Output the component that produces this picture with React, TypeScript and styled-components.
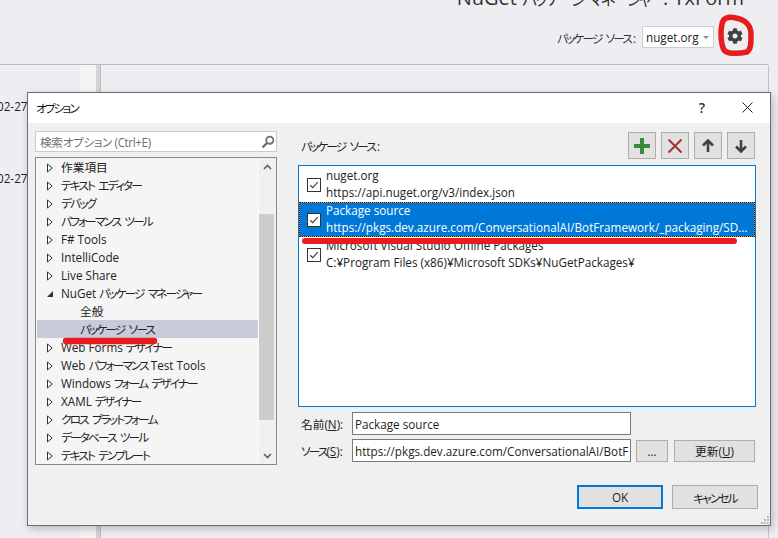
import styled, { createGlobalStyle } from 'styled-components';
import { FaCog } from 'react-icons/fa';

const Global = createGlobalStyle`
  html, body { margin: 0; padding: 0; background: #eeeef2; }
  body {
    width: 778px; height: 538px; overflow: hidden; position: relative;
    font-family: "Open Sans", "Noto Sans CJK JP", sans-serif; font-size: 11.7px; color: #1e1e1e;
    font-feature-settings: "palt";
  }
  input, button { font-family: inherit; font-size: 11.7px; color: #1e1e1e; font-feature-settings: "palt"; }
`;

const Kana = styled.span`letter-spacing: -1.9px; word-spacing: 3px;`;
const TitleKana = styled.span`font-size: 16px; letter-spacing: -2.4px; word-spacing: 3px;`;
const Colon = styled.span`margin-left: 2px;`;

const Page = styled.div`width: 778px; height: 538px; display: flex; flex-direction: column; overflow: hidden;`;
const Header = styled.header`
  height: 64px; flex: none; border-bottom: 1px solid #b9b9bc; margin-right: 10px;
  display: flex; flex-direction: column; align-items: flex-end; padding-right: 25px; overflow: hidden;
`;
const Title = styled.div`font-size: 20px; line-height: 26px; margin: -15px -1px 0 0; white-space: nowrap; color: #333;`;
const SourceBar = styled.div`display: flex; align-items: center; gap: 6px; margin-top: 14px;`;
const BarLabel = styled.span`color: #333; white-space: nowrap;`;
const Combo = styled.div`
  width: 72px; height: 22px; box-sizing: border-box; background: #fff; border: 1px solid #ccced3;
  display: flex; align-items: center; justify-content: space-between; padding: 0 4px 0 3px; color: #1e1e1e;
`;
const ComboArrow = styled.span`border-left: 3px solid transparent; border-right: 3px solid transparent; border-top: 3px solid #888;`;
const GearBtn = styled.span`display: flex; width: 16px; height: 16px; margin: -2px 0 0 7px; color: #424242; font-size: 16px;`;

const Under = styled.div`flex: 1; display: flex; min-height: 0;`;
const LogColumn = styled.div`
  width: 80px; flex: none; overflow: hidden; padding-top: 32px; display: flex; flex-direction: column; gap: 54px;
`;
const LogLine = styled.div`margin-left: -3px; line-height: 18px; white-space: nowrap;`;
const Splitter = styled.div`width: 16px; flex: none; background: #f5f5f6;`;
const SplitGrip = styled.div`width: 4px; flex: none; background: #d4d4d6; border-right: 1px solid #bdbdc0; margin-right: 2px;`;
const Fill = styled.div`flex: 1;`;
const RightEdge = styled.div`width: 1px; flex: none; background: #c4c4c7; margin-right: 9px;`;

const Dialog = styled.section`
  position: absolute; left: 27px; top: 92px; width: 744px; height: 434px; box-sizing: border-box;
  background: #f0f0f0; border: 1px solid #6c6c6c; box-shadow: 2px 3px 8px rgba(0,0,0,.22);
  display: flex; flex-direction: column;
`;
const TitleBar = styled.div`
  height: 30px; box-sizing: border-box; flex: none; background: #fff; display: flex; align-items: center; padding: 0 17px 2px 8px;
`;
const DialogTitle = styled.div`flex: 1; color: #111;`;
const Help = styled.span`font-size: 14px; font-weight: 600; color: #333; margin-right: 37px;`;
const Body = styled.div`flex: 1; display: flex; padding: 8px 14px 0 7px; gap: 21px; min-height: 0; position: relative;`;

const LeftCol = styled.div`width: 242px; flex: none; display: flex; flex-direction: column; gap: 5px;`;
const SearchBox = styled.div`
  height: 21px; box-sizing: border-box; border: 1px solid #c9c9d2; background: #fff; display: flex; align-items: center; padding: 0 1px 0 4px;
`;
const SearchInput = styled.input`
  flex: 1; min-width: 0; border: 0; padding: 0; background: transparent; outline: 0;
  &::placeholder { color: #6f6f6f; opacity: 1; letter-spacing: -0.4px; }
`;
const Tree = styled.div`
  height: 308px; box-sizing: border-box; border: 1px solid #828790; background: #f5f5f5; display: flex; overflow: hidden;
`;
const TreeRows = styled.div`flex: 1; min-width: 0; padding-left: 1px; overflow: hidden;`;
const TreeRow = styled.div<{ $level?: number; $active?: boolean }>`
  height: 18px; display: block; line-height: 18px; white-space: nowrap; color: #222;
  padding-left: ${p => (p.$level ? 43 : 10)}px;
  background: ${p => (p.$active ? '#c9cbda' : 'transparent')};
`;
const Twisty = styled.svg`width: 6px; height: 10px; margin-right: 8px; vertical-align: -1px;`;
const ScrollBar = styled.div`width: 17px; flex: none; background: #f0f0f0; display: flex; flex-direction: column; align-items: center; border-left: 1px solid #fafafa;`;
const ScrollBtn = styled.div`height: 17px; flex: none; display: flex; align-items: center; justify-content: center;`;
const ScrollTrack = styled.div`flex: 1; width: 100%; padding-top: 39px; box-sizing: border-box;`;
const ScrollThumb = styled.div`height: 206px; width: 15px; background: #cdcdcd;`;

const RightCol = styled.div`flex: 1; min-width: 0; display: flex; flex-direction: column;`;
const ToolRow = styled.div`height: 34px; flex: none; display: flex; align-items: flex-start; justify-content: space-between; padding: 0 1px 0 3px;`;
const SourcesLabel = styled.div`padding-top: 6px; line-height: 18px; color: #222;`;
const Tools = styled.div`display: flex; gap: 5px; margin-top: 1px;`;
const ToolBtn = styled.button`
  width: 28px; height: 27px; box-sizing: border-box; padding: 0; background: #e1e1e1; border: 1px solid #adadad;
  display: flex; align-items: center; justify-content: center;
`;
const SourceList = styled.div`height: 242px; flex: none; box-sizing: border-box; border: 1px solid #0078d7; background: #fff; padding-top: 1px;`;
const SourceRow = styled.div<{ $selected?: boolean }>`
  height: 35px; box-sizing: border-box; display: flex; align-items: center; padding-left: 7px; gap: 5px;
  color: ${p => (p.$selected ? '#fff' : '#222')};
  border: 1px ${p => (p.$selected ? 'dotted #1a1a1a' : 'solid transparent')};
  background: ${p => (p.$selected ? 'linear-gradient(#0078d7,#0078d7) padding-box, #ff8a1f border-box' : 'transparent')};
`;
const Check = styled.svg`width: 14px; height: 14px; flex: none;`;
const SourceText = styled.div`flex: 1; min-width: 0; line-height: 16.5px; padding-bottom: 2px;`;
const SourceLine = styled.div`white-space: nowrap; overflow: hidden; text-overflow: ellipsis; padding-right: 3px;`;

const FormRows = styled.div`display: flex; flex-direction: column; gap: 4px; margin-top: 5px;`;
const FormRow = styled.div`display: flex; align-items: flex-end; gap: 5px; padding-left: 3px;`;
const FormLabel = styled.label`width: 46px; flex: none; line-height: 22px; color: #222; white-space: nowrap;`;
const FormInput = styled.input`
  width: 279px; height: 23px; box-sizing: border-box; flex: none; border: 1px solid #7a7a7a; background: #fff; padding: 0 2px; outline: 0;
`;
const SmallBtn = styled.button<{ $w: number; $gap?: number }>`
  width: ${p => p.$w}px; height: 22px; box-sizing: border-box; padding: 0; background: #e1e1e1; border: 1px solid #adadad;
  line-height: 18px; flex: none; margin-left: ${p => p.$gap ?? 0}px;
`;
const Footer = styled.div`display: flex; justify-content: flex-end; gap: 9px; margin: 23px -2px 0 0;`;
const DlgBtn = styled.button<{ $primary?: boolean }>`
  width: 86px; height: 24px; box-sizing: border-box; padding: 0; background: #e1e1e1;
  border: ${p => (p.$primary ? '2px solid #0078d7' : '1px solid #adadad')};
`;
const Grip = styled.svg`position: absolute; right: 1px; bottom: 1px; width: 9px; height: 9px;`;
const Marks = styled.svg`position: absolute; left: 0; top: 0; width: 778px; height: 538px; pointer-events: none;`;

const closed = ['作業項目', 'テキスト エディター', 'デバッグ', 'パフォーマンス ツール', 'F# Tools', 'IntelliCode', 'Live Share'];
const closedAfter = ['Web Forms デザイナー', 'Web パフォーマンス Test Tools', 'Windows フォーム デザイナー', 'XAML デザイナー', 'クロス プラットフォーム', 'データベース ツール', 'テキスト テンプレート'];
const sources = [
  { name: 'nuget.org', url: 'https://api.nuget.org/v3/index.json' },
  { name: 'Package source', url: 'https://pkgs.dev.azure.com/ConversationalAI/BotFramework/_packaging/SDK/nuget/v3/index.json', selected: true },
  { name: 'Microsoft Visual Studio Offline Packages', url: 'C:¥Program Files (x86)¥Microsoft SDKs¥NuGetPackages¥' },
];

// katakana runs are set tighter, the fonts here are wider than the original UI font
function Mixed({ text }: { text: string }) {
  const parts = text.split(/([\u30a0-\u30ff]+(?: [\u30a0-\u30ff]+)*)/);
  return <>{parts.map((p, i) => (i % 2 ? <Kana key={i}>{p}</Kana> : p))}</>;
}

function Closed() {
  return <Twisty viewBox="0 0 6 10"><path d="M.5 1v8L5.2 5z" fill="#fff" stroke="#333" /></Twisty>;
}
function Open() {
  return <Twisty viewBox="0 0 6 10"><path d="M6 2v6H0z" fill="#333" /></Twisty>;
}
function CheckBox() {
  return (
    <Check viewBox="0 0 14 14">
      <rect x=".5" y=".5" width="13" height="13" fill="#fff" stroke="#333" />
      <path d="M3.2 7.2 5.7 9.6 10.8 4.2" fill="none" stroke="#444" strokeWidth="1.2" />
    </Check>
  );
}

export default function App() {
  return (
    <>
      <Global />
      <Page>
        <Header>
          <Title>NuGet <TitleKana>パッケージ マネージャー</TitleKana>: TxForm</Title>
          <SourceBar>
            <BarLabel><Mixed text="パッケージ ソース" /><Colon>:</Colon></BarLabel>
            <Combo>nuget.org<ComboArrow /></Combo>
            <GearBtn><FaCog /></GearBtn>
          </SourceBar>
        </Header>
        <Under>
          <LogColumn>
            <LogLine>02-275</LogLine>
            <LogLine>02-275</LogLine>
          </LogColumn>
          <Splitter />
          <SplitGrip />
          <Fill />
          <RightEdge />
        </Under>
      </Page>

      <Dialog>
        <TitleBar>
          <DialogTitle><Mixed text="オプション" /></DialogTitle>
          <Help>?</Help>
          <svg width="11" height="11" viewBox="0 0 11 11"><path d="M.5.5l10 10M10.5.5l-10 10" stroke="#222" fill="none" /></svg>
        </TitleBar>
        <Body>
          <LeftCol>
            <SearchBox>
              <SearchInput readOnly placeholder="検索オプション (Ctrl+E)" />
              <svg width="14" height="14" viewBox="0 0 14 14"><circle cx="8.8" cy="5.2" r="3.6" fill="none" stroke="#707070" strokeWidth="1.8" /><path d="M6 8 1.5 12.5" stroke="#707070" strokeWidth="2.4" /></svg>
            </SearchBox>
            <Tree>
              <TreeRows>
                {closed.map(t => <TreeRow key={t}><Closed /><Mixed text={t} /></TreeRow>)}
                <TreeRow><Open /><Mixed text="NuGet パッケージ マネージャー" /></TreeRow>
                <TreeRow $level={1}>全般</TreeRow>
                <TreeRow $level={1} $active><Mixed text="パッケージ ソース" /></TreeRow>
                {closedAfter.map(t => <TreeRow key={t}><Closed /><Mixed text={t} /></TreeRow>)}
              </TreeRows>
              <ScrollBar>
                <ScrollBtn><svg width="9" height="6" viewBox="0 0 9 6"><path d="M1 5l3.5-3.5L8 5" fill="none" stroke="#606060" strokeWidth="1.6" /></svg></ScrollBtn>
                <ScrollTrack><ScrollThumb /></ScrollTrack>
                <ScrollBtn><svg width="9" height="6" viewBox="0 0 9 6"><path d="M1 1l3.5 3.5L8 1" fill="none" stroke="#606060" strokeWidth="1.6" /></svg></ScrollBtn>
              </ScrollBar>
            </Tree>
          </LeftCol>

          <RightCol>
            <ToolRow>
              <SourcesLabel><Mixed text="パッケージ ソース" /><Colon>:</Colon></SourcesLabel>
              <Tools>
                <ToolBtn><svg width="16" height="16" viewBox="0 0 16 16"><path d="M6 0h4v6h6v4h-6v6H6v-6H0V6h6z" fill="#388a34" /></svg></ToolBtn>
                <ToolBtn><svg width="16" height="16" viewBox="0 0 16 16"><path d="M1.5 1.5l13 13M14.5 1.5l-13 13" stroke="#a1362a" strokeWidth="2" fill="none" /></svg></ToolBtn>
                <ToolBtn><svg width="12" height="14" viewBox="0 0 12 14"><path d="M6 13V2M1 6.5 6 1.5l5 5" fill="none" stroke="#424242" strokeWidth="2.6" /></svg></ToolBtn>
                <ToolBtn><svg width="12" height="14" viewBox="0 0 12 14"><path d="M6 1v11M1 7.5l5 5 5-5" fill="none" stroke="#424242" strokeWidth="2.6" /></svg></ToolBtn>
              </Tools>
            </ToolRow>
            <SourceList>
              {sources.map(s => (
                <SourceRow key={s.name} $selected={s.selected}>
                  <CheckBox />
                  <SourceText>
                    <SourceLine>{s.name}</SourceLine>
                    <SourceLine>{s.url}</SourceLine>
                  </SourceText>
                </SourceRow>
              ))}
            </SourceList>
            <FormRows>
              <FormRow>
                <FormLabel>名前(<u>N</u>):</FormLabel>
                <FormInput readOnly value="Package source" />
              </FormRow>
              <FormRow>
                <FormLabel><Mixed text="ソース" />(<u>S</u>):</FormLabel>
                <FormInput readOnly value="https://pkgs.dev.azure.com/ConversationalAI/BotFramework/_packaging/SDK/nuget/v3/index.json" />
                <SmallBtn $w={32}>...</SmallBtn>
                <SmallBtn $w={81} $gap={1}>更新(<u>U</u>)</SmallBtn>
              </FormRow>
            </FormRows>
            <Footer>
              <DlgBtn $primary>OK</DlgBtn>
              <DlgBtn><Mixed text="キャンセル" /></DlgBtn>
            </Footer>
          </RightCol>
          <Grip viewBox="0 0 9 9"><path d="M7 1h2v2H7zM4 4h2v2H4zM7 4h2v2H7zM1 7h2v2H1zM4 7h2v2H4zM7 7h2v2H7z" fill="#b8b8b8" /></Grip>
        </Body>
      </Dialog>

      <Marks viewBox="0 0 778 538">
        <path d="M736 18c-8-2-13 0-14 6-2 8-1 20 2 26 3 4 14 4 23 2 4-3 4-8 4-18 0-8-5-14-15-16z" fill="none" stroke="#e81c1c" strokeWidth="5.5" />
        <path d="M305 241 734 241" stroke="#e81c1c" strokeWidth="6" strokeLinecap="round" />
        <path d="M66 341 154 341" stroke="#e81c1c" strokeWidth="6.5" strokeLinecap="round" />
      </Marks>
    </>
  );
}
